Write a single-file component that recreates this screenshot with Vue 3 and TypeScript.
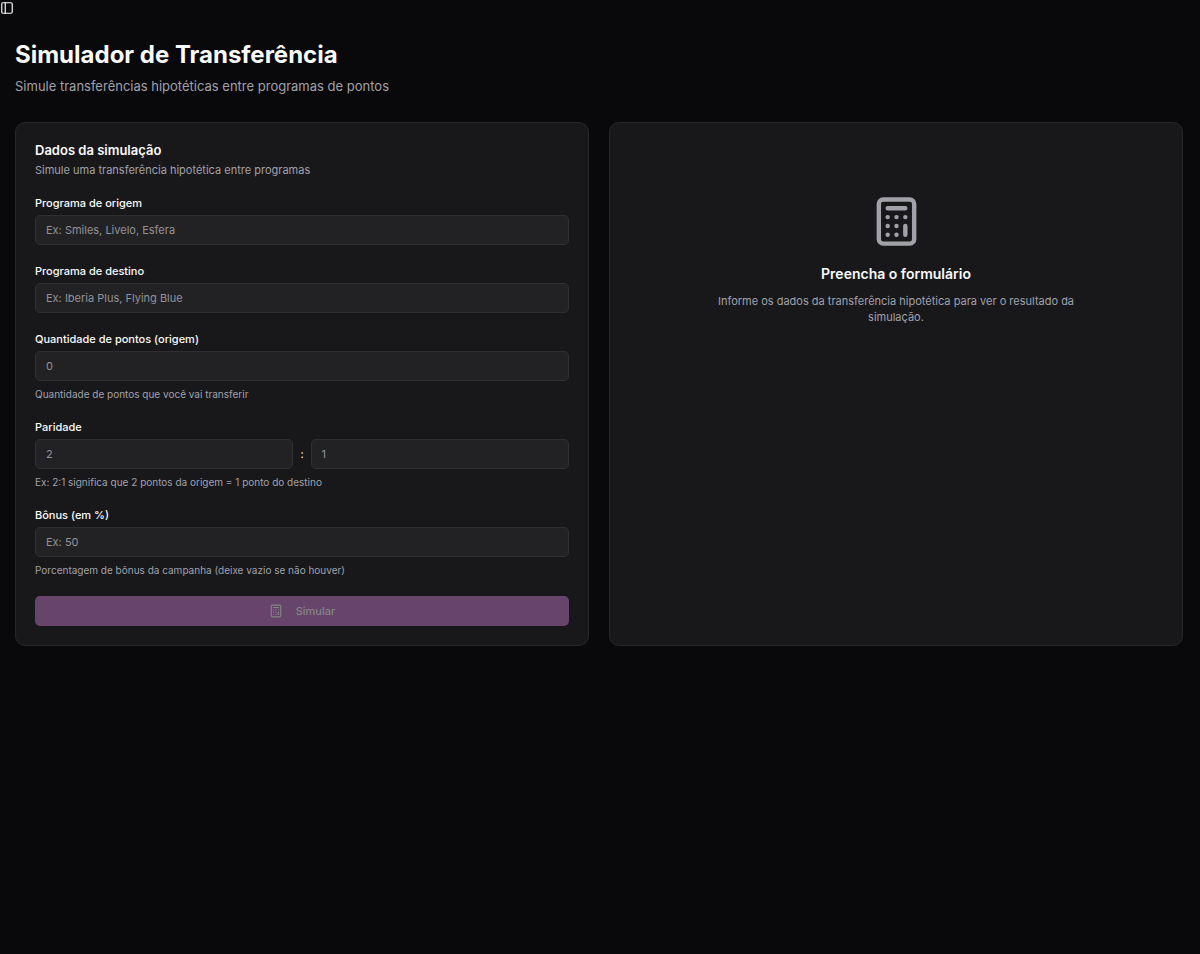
<script setup lang="ts">
import { computed, ref } from 'vue'

const origin = ref('')
const destination = ref('')
const points = ref('')
const ratioFrom = ref('')
const ratioTo = ref('')
const bonus = ref('')

const incomplete = computed(() => !origin.value || !destination.value || !points.value)
</script>

<template>
  <div class="page">
    <button class="sidebar-toggle" type="button" aria-label="Alternar menu lateral">
      <svg viewBox="0 0 24 24" aria-hidden="true">
        <rect x="3" y="3" width="18" height="18" rx="2" />
        <path d="M9 3v18" />
      </svg>
    </button>

    <main class="content">
      <header class="heading">
        <h1>Simulador de Transferência</h1>
        <p>Simule transferências hipotéticas entre programas de pontos</p>
      </header>

      <div class="columns">
        <section class="card">
          <div class="card-header">
            <h2>Dados da simulação</h2>
            <p>Simule uma transferência hipotética entre programas</p>
          </div>

          <form class="form" @submit.prevent>
            <div class="field">
              <label for="origin">Programa de origem</label>
              <input id="origin" v-model="origin" type="text" placeholder="Ex: Smiles, Livelo, Esfera" />
            </div>
            <div class="field">
              <label for="destination">Programa de destino</label>
              <input id="destination" v-model="destination" type="text" placeholder="Ex: Iberia Plus, Flying Blue" />
            </div>
            <div class="field">
              <label for="points">Quantidade de pontos (origem)</label>
              <input id="points" v-model="points" type="text" inputmode="numeric" placeholder="0" />
              <p class="hint">Quantidade de pontos que você vai transferir</p>
            </div>
            <div class="field">
              <label for="ratio-from">Paridade</label>
              <div class="ratio">
                <input id="ratio-from" v-model="ratioFrom" type="text" inputmode="numeric" placeholder="2" />
                <span>:</span>
                <input v-model="ratioTo" type="text" inputmode="numeric" placeholder="1" aria-label="Paridade do destino" />
              </div>
              <p class="hint">Ex: 2:1 significa que 2 pontos da origem = 1 ponto do destino</p>
            </div>
            <div class="field">
              <label for="bonus">Bônus (em %)</label>
              <input id="bonus" v-model="bonus" type="text" inputmode="numeric" placeholder="Ex: 50" />
              <p class="hint">Porcentagem de bônus da campanha (deixe vazio se não houver)</p>
            </div>
            <button class="submit" type="submit" :disabled="incomplete">
              <svg viewBox="0 0 24 24" aria-hidden="true">
                <rect x="4" y="2" width="16" height="20" rx="2" />
                <path d="M8 6h8M16 14v4M16 10h.01M12 10h.01M8 10h.01M12 14h.01M8 14h.01M12 18h.01M8 18h.01" />
              </svg>
              Simular
            </button>
          </form>
        </section>

        <section class="card empty">
          <svg viewBox="0 0 24 24" aria-hidden="true">
            <rect x="4" y="2" width="16" height="20" rx="2" />
            <path d="M8 6h8M16 14v4M16 10h.01M12 10h.01M8 10h.01M12 14h.01M8 14h.01M12 18h.01M8 18h.01" />
          </svg>
          <h2>Preencha o formulário</h2>
          <p>Informe os dados da transferência hipotética para ver o resultado da simulação.</p>
        </section>
      </div>
    </main>
  </div>
</template>

<style>
body {
  margin: 0;
  background: #09090b;
}
</style>

<style scoped>
.page {
  min-height: 100vh;
  color: #fafafa;
  font-family: Inter, "Liberation Sans", sans-serif;
  font-size: 11px;
  line-height: 16px;
}

h1,
h2,
p {
  margin: 0;
}

svg {
  fill: none;
  stroke: currentColor;
  stroke-width: 2;
  stroke-linecap: round;
  stroke-linejoin: round;
}

.sidebar-toggle {
  display: block;
  width: 14px;
  height: 16px;
  padding: 0 0 1px;
  border: 0;
  background: none;
  color: inherit;
}

.sidebar-toggle svg {
  display: block;
  width: 14px;
  height: 14px;
}

.content {
  padding: 24px 17px 24px 15px;
}

.heading h1 {
  font-size: 24px;
  font-weight: 700;
  line-height: 30px;
}

.heading p {
  margin-top: 6px;
  color: #a1a1aa;
  font-size: 13px;
  line-height: 20px;
}

.columns {
  display: grid;
  grid-template-columns: 1fr 1fr;
  gap: 20px;
  margin-top: 26px;
}

.card {
  padding: 19px;
  border: 1px solid #27272a;
  border-radius: 10px;
  background: #18181b;
}

.card-header h2 {
  font-size: 13px;
  font-weight: 600;
}

.card-header p {
  margin-top: 4px;
  color: #a1a1aa;
}

.form {
  display: flex;
  flex-direction: column;
  gap: 18px;
  margin-top: 17px;
}

.field {
  display: flex;
  flex-direction: column;
  gap: 4px;
}

label {
  font-weight: 500;
}

input {
  box-sizing: border-box;
  width: 100%;
  min-width: 0;
  height: 30px;
  padding: 0 10px;
  border: 1px solid #2f2f32;
  border-radius: 5px;
  background: #222224;
  color: inherit;
  font: inherit;
}

input::placeholder {
  color: #929299;
  opacity: 1;
}

.ratio {
  display: flex;
  align-items: center;
  gap: 7px;
}

.hint {
  padding-top: 2px;
  color: #a1a1aa;
  font-size: 10px;
  line-height: 14px;
}

.submit {
  display: flex;
  align-items: center;
  justify-content: center;
  gap: 13px;
  height: 30px;
  margin-top: 1px;
  padding: 0;
  border: 0;
  border-radius: 5px;
  background: #67456b;
  color: #858487;
  font: inherit;
  font-weight: 500;
}

.submit svg {
  width: 14px;
  height: 14px;
}

.empty {
  display: flex;
  flex-direction: column;
  align-items: center;
  padding-top: 72px;
  text-align: center;
}

.empty svg {
  width: 53px;
  height: 53px;
  color: #a1a1aa;
}

.empty h2 {
  margin-top: 14px;
  font-size: 14px;
  font-weight: 600;
  line-height: 24px;
}

.empty p {
  max-width: 372px;
  margin-top: 7px;
  color: #a1a1aa;
}
</style>
